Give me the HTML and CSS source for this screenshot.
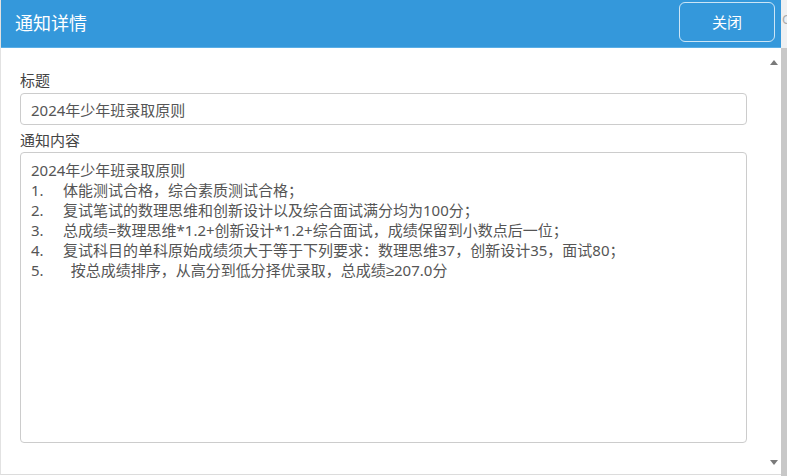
FILE: index.html
```html
<!DOCTYPE html>
<html lang="zh-CN">
<head>
    <meta charset="UTF-8">
    <meta name="viewport" content="width=device-width, initial-scale=1.0">
    <title>通知详情</title>
    <link rel="stylesheet" href="styles.css">
</head>
<body>
    <div class="page">
        <div class="dialog">
            <div class="dialog-header">
                <h2>通知详情</h2>
                <button type="button" class="btn-close">关闭</button>
            </div>
            <div class="dialog-body">
                <div class="dialog-content">
                    <div class="form-group">
                        <label for="title">标题</label>
                        <input type="text" id="title" name="title" value="2024年少年班录取原则" readonly>
                    </div>
                    <div class="form-group">
                        <label for="content">通知内容</label>
                        <textarea id="content" name="content" readonly>2024年少年班录取原则
1.	体能测试合格，综合素质测试合格；
2.	复试笔试的数理思维和创新设计以及综合面试满分均为100分；
3.	总成绩=数理思维*1.2+创新设计*1.2+综合面试，成绩保留到小数点后一位；
4.	复试科目的单科原始成绩须大于等于下列要求：数理思维37，创新设计35，面试80；
5.	  按总成绩排序，从高分到低分择优录取，总成绩≥207.0分</textarea>
                    </div>
                </div>
                <div class="scrollbar">
                    <span class="arrow-up"></span>
                    <span class="arrow-down"></span>
                </div>
            </div>
        </div>
        <div class="side-strip">
            <div class="side-top"><span>Q</span></div>
        </div>
    </div>
</body>
</html>
```

FILE: styles.css
```css
html, body {
    margin: 0;
    padding: 0;
    background: #fff;
}
body {
    font-family: "Noto Sans", "Noto Sans CJK SC", sans-serif;
    font-size: 15px;
    color: #444;
}
.page {
    display: flex;
    width: 787px;
    height: 476px;
    overflow: hidden;
}
.dialog {
    flex: 0 0 781px;
    height: 475px;
    display: flex;
    flex-direction: column;
    border-left: 1px solid #e2e2e2;
    border-bottom: 1px solid #dcdcdc;
    box-sizing: border-box;
}
.dialog-header {
    height: 48px;
    box-sizing: border-box;
    padding: 2px 6px 6px 14px;
    background-color: #3498db;
    display: flex;
    align-items: center;
    justify-content: space-between;
    border-bottom: 1px solid #5aaee6;
}
.dialog-header h2 {
    margin: 0;
    font-size: 18px;
    font-weight: normal;
    color: #fff;
}
.btn-close {
    width: 96px;
    height: 40px;
    background: transparent;
    border: 1px solid rgba(255,255,255,0.75);
    border-radius: 6px;
    color: #fff;
    font-family: "Noto Sans", "Noto Sans CJK SC", sans-serif;
    font-size: 15px;
    cursor: pointer;
}
.dialog-body {
    flex: 1;
    display: flex;
}
.dialog-content {
    flex: 1;
    padding: 22px 19px 0 19px;
}
.form-group label {
    display: block;
    line-height: 20px;
    margin-bottom: 3px;
    color: #444;
}
.form-group + .form-group {
    margin-top: 5px;
}
.form-group + .form-group label {
    margin-bottom: 2px;
}
.form-group input, .form-group textarea {
    display: block;
    width: 100%;
    box-sizing: border-box;
    border: 1px solid #ccc;
    border-radius: 4px;
    font-family: "Noto Sans", "Liberation Sans", "Noto Sans CJK SC", sans-serif;
    font-size: 15px;
    color: #555;
    outline: none;
}
.form-group input {
    height: 32px;
    padding: 0 10px;
}
.form-group textarea {
    height: 291px;
    padding: 7px 10px;
    line-height: 20px;
    resize: none;
    tab-size: 32px;
    overflow: hidden;
}
.scrollbar {
    width: 15px;
    display: flex;
    flex-direction: column;
    justify-content: space-between;
    align-items: center;
    padding: 12px 0 9px;
}
.arrow-up, .arrow-down {
    width: 0;
    height: 0;
    border-left: 4.5px solid transparent;
    border-right: 4.5px solid transparent;
}
.arrow-up {
    border-bottom: 5px solid #7a7a7a;
}
.arrow-down {
    border-top: 5px solid #7a7a7a;
}
.side-strip {
    flex: 0 0 6px;
    height: 476px;
    background: #c8c8c8;
}
.side-top {
    height: 48px;
    background: #eef0f2;
    overflow: hidden;
}
.side-top span {
    display: block;
    margin: 11px 0 0 1px;
    font-size: 13px;
    line-height: 16px;
    color: #aaa;
}
```
